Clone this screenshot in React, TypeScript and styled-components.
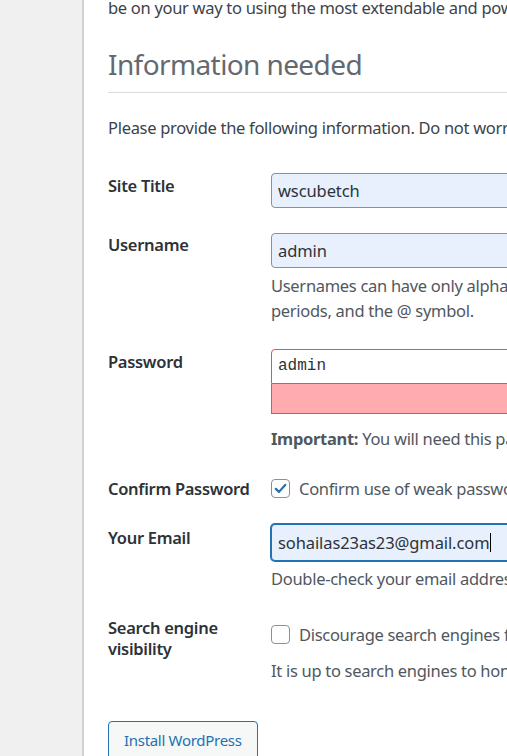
import React from 'react'
import styled, { createGlobalStyle } from 'styled-components'

const GlobalStyle = createGlobalStyle`
  html, body {
    margin: 0;
    padding: 0;
    background: #f0f0f1;
  }
  body {
    font-family: "Noto Sans", "Liberation Sans", sans-serif;
    font-size: 16.5px;
    letter-spacing: -0.3px;
    line-height: 23px;
    color: #3c434a;
  }
`

const Page = styled.div`
  display: flex;
  width: 507px;
  height: 756px;
  overflow: hidden;
`

const Side = styled.div`
  flex: 0 0 82px;
  background: #f0f0f1;
`

const Panel = styled.main`
  flex: 0 0 900px;
  background: #fff;
  border-left: 2px solid #d0d1d3;
  padding: 0 0 0 24px;
  white-space: nowrap;
`

const Lead = styled.p`
  margin: -4px 0 0;
`

const Heading = styled.h1`
  margin: 26px 0 0;
  padding: 0 0 8px;
  font-size: 28px;
  letter-spacing: -0.6px;
  line-height: 39px;
  font-weight: 400;
  color: #646970;
  border-bottom: 1px solid #dcdcde;
`

const Intro = styled.p`
  margin: 23px 0 0;
`

const Row = styled.div<{ $top: number }>`
  display: grid;
  grid-template-columns: 163px 1fr;
  align-items: start;
  margin-top: ${(p) => p.$top}px;
`

const Label = styled.div<{ $offset?: number }>`
  font-weight: 600;
  color: #2c3338;
  line-height: 21px;
  margin-top: ${(p) => p.$offset || 0}px;
  white-space: normal;
`

const Field = styled.div<{ $offset?: number }>`
  display: flex;
  flex-direction: column;
  padding-top: ${(p) => p.$offset || 0}px;
`

const TextBox = styled.div<{ $state?: 'filled' | 'weak' | 'focus' }>`
  box-sizing: border-box;
  width: 420px;
  height: 35px;
  display: flex;
  align-items: center;
  padding: 0 6px;
  border: 1px solid #8c8f94;
  border-radius: 4px;
  background: #e8f0fe;
  color: #2c3338;
  letter-spacing: -0.1px;
  ${(p) =>
    p.$state === 'weak' &&
    `
    background: #fff;
    border-color: #e65054;
    border-radius: 4px 4px 0 0;
    font-family: "Liberation Mono", "DejaVu Sans Mono", monospace;
    font-size: 16px;
    letter-spacing: 0;
  `}
  ${(p) =>
    p.$state === 'focus' &&
    `
    height: 37px;
    border-color: #2271b1;
    box-shadow: 0 0 0 1px #2271b1;
  `}
`

const Caret = styled.span`
  display: inline-block;
  width: 1px;
  height: 19px;
  background: #000;
  margin-left: 1px;
`

const Strength = styled.div`
  box-sizing: border-box;
  width: 420px;
  height: 30px;
  background: #ffabaf;
  border: 1px solid #e65054;
  border-top: none;
`

const Note = styled.p<{ $top: number; $leading?: number }>`
  margin: ${(p) => p.$top}px 0 0;
  line-height: ${(p) => p.$leading || 23}px;
  color: #50575e;
`

const Check = styled.label`
  display: flex;
  align-items: center;
  gap: 9px;
  color: #50575e;
`

const Box = styled.span`
  box-sizing: border-box;
  width: 19px;
  height: 19px;
  flex: 0 0 19px;
  border: 1px solid #8c8f94;
  border-radius: 4px;
  background: #fff;
  display: flex;
  align-items: center;
  justify-content: center;
`

const InstallButton = styled.button`
  margin-top: 39px;
  height: 42px;
  padding: 11px 15px 0;
  background: #f6f7f7;
  border: 1px solid #2271b1;
  border-radius: 4px;
  color: #2271b1;
  font-family: "Noto Sans", "Liberation Sans", sans-serif;
  font-size: 15px;
  letter-spacing: -0.3px;
  line-height: 1;
  display: flex;
  align-items: flex-start;
`

function CheckBox({ checked }: { checked?: boolean }) {
  return (
    <Box>
      {checked && (
        <svg width="15" height="15" viewBox="0 0 16 16">
          <path
            d="M3 8.4 L6.4 11.6 L13 4.2"
            fill="none"
            stroke="#2271b1"
            strokeWidth="2.4"
            strokeLinecap="round"
            strokeLinejoin="round"
          />
        </svg>
      )}
    </Box>
  )
}

export default function App() {
  return (
    <Page>
      <GlobalStyle />
      <Side />
      <Panel>
        <Lead>be on your way to using the most extendable and powerful personal publishing platform in the world.</Lead>
        <Heading>Information needed</Heading>
        <Intro>Please provide the following information. Do not worry, you can always change these settings later.</Intro>

        <Row $top={34}>
          <Label $offset={2}>Site Title</Label>
          <Field>
            <TextBox $state="filled">wscubetch</TextBox>
          </Field>
        </Row>

        <Row $top={25}>
          <Label $offset={1}>Username</Label>
          <Field>
            <TextBox $state="filled">admin</TextBox>
            <Note $top={5} $leading={25}>
              Usernames can have only alphanumeric characters, spaces, underscores, hyphens,
              <br />
              periods, and the @ symbol.
            </Note>
          </Field>
        </Row>

        <Row $top={26}>
          <Label $offset={2}>Password</Label>
          <Field>
            <TextBox $state="weak">admin</TextBox>
            <Strength />
            <Note $top={13}>
              <b>Important:</b> You will need this password to log&nbsp;in. Please store it in a secure location.
            </Note>
          </Field>
        </Row>

        <Row $top={27}>
          <Label $offset={1}>Confirm Password</Label>
          <Field>
            <Check>
              <CheckBox checked />
              Confirm use of weak password
            </Check>
          </Field>
        </Row>

        <Row $top={24}>
          <Label $offset={3}>Your Email</Label>
          <Field>
            <TextBox $state="focus">
              sohailas23as23@gmail.com
              <Caret />
            </TextBox>
            <Note $top={6}>Double-check your email address before continuing.</Note>
          </Field>
        </Row>

        <Row $top={27}>
          <Label>
            Search engine
            <br />
            visibility
          </Label>
          <Field $offset={6}>
            <Check>
              <CheckBox />
              Discourage search engines from indexing this site
            </Check>
            <Note $top={13}>It is up to search engines to honor this request.</Note>
          </Field>
        </Row>

        <InstallButton>Install WordPress</InstallButton>
      </Panel>
    </Page>
  )
}
